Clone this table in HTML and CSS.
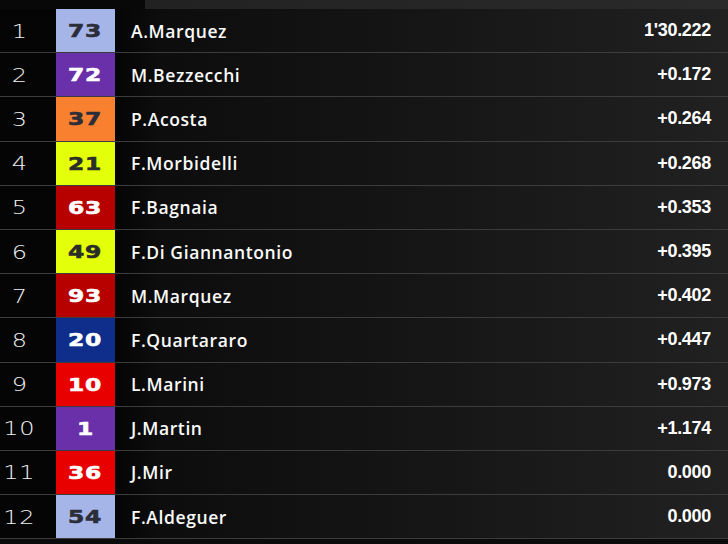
FILE: index.html
```html
<!DOCTYPE html>
<html>
<head>
<meta charset="utf-8">
<link rel="stylesheet" href="styles.css">
</head>
<body>
<div class="top"><div class="top-left"></div><div class="top-right"></div></div>
<div class="table">
  <div class="row"><div class="pos"><span>1</span></div><div class="num c-lav"><span>73</span></div><div class="name">A.Marquez</div><div class="time">1'30.222</div></div>
  <div class="row"><div class="pos"><span>2</span></div><div class="num c-pur"><span>72</span></div><div class="name">M.Bezzecchi</div><div class="time">+0.172</div></div>
  <div class="row"><div class="pos"><span>3</span></div><div class="num c-ora"><span>37</span></div><div class="name">P.Acosta</div><div class="time">+0.264</div></div>
  <div class="row"><div class="pos"><span>4</span></div><div class="num c-yel"><span>21</span></div><div class="name">F.Morbidelli</div><div class="time">+0.268</div></div>
  <div class="row"><div class="pos"><span>5</span></div><div class="num c-dred"><span>63</span></div><div class="name">F.Bagnaia</div><div class="time">+0.353</div></div>
  <div class="row"><div class="pos"><span>6</span></div><div class="num c-yel"><span>49</span></div><div class="name">F.Di Giannantonio</div><div class="time">+0.395</div></div>
  <div class="row"><div class="pos"><span>7</span></div><div class="num c-dred"><span>93</span></div><div class="name">M.Marquez</div><div class="time">+0.402</div></div>
  <div class="row"><div class="pos"><span>8</span></div><div class="num c-blu"><span>20</span></div><div class="name">F.Quartararo</div><div class="time">+0.447</div></div>
  <div class="row"><div class="pos"><span>9</span></div><div class="num c-red"><span>10</span></div><div class="name">L.Marini</div><div class="time">+0.973</div></div>
  <div class="row"><div class="pos"><span>10</span></div><div class="num c-pur"><span>1</span></div><div class="name">J.Martin</div><div class="time">+1.174</div></div>
  <div class="row"><div class="pos"><span>11</span></div><div class="num c-red"><span>36</span></div><div class="name">J.Mir</div><div class="time">0.000</div></div>
  <div class="row"><div class="pos"><span>12</span></div><div class="num c-lav"><span>54</span></div><div class="name">F.Aldeguer</div><div class="time">0.000</div></div>
</div>
</body>
</html>
```
FILE: styles.css
```css
html, body {
  margin: 0;
  padding: 0;
}
body {
  width: 728px;
  height: 544px;
  overflow: hidden;
  background: #0b0b0b;
  font-family: "Open Sans", "DejaVu Sans", sans-serif;
  color: #fff;
}
.top {
  display: flex;
  height: 9px;
}
.top-left {
  width: 145px;
  background: #080808;
}
.top-right {
  flex: 1;
  background: linear-gradient(to right, #222 0%, #2a2a2a 100%);
}
.table {
  display: flex;
  flex-direction: column;
}
.row {
  display: flex;
  align-items: stretch;
  height: 43.2px;
  border-bottom: 1px solid #3c3c3c;
  background: linear-gradient(to right, #050505 0%, #050505 16%, #0d0d0d 22%, #161616 60%, #212121 100%);
}
.pos {
  width: 39px;
  margin-right: 17px;
  display: flex;
  align-items: center;
  justify-content: center;
  font-family: "DejaVu Sans", sans-serif;
  font-size: 20px;
  font-weight: 300;
  color: #f2f2f2;
}
.pos span {
  display: inline-block;
  transform: scaleX(1.2);
  letter-spacing: 0.5px;
}
.num {
  width: 59px;
  display: flex;
  align-items: center;
  justify-content: center;
  font-family: "DejaVu Sans", sans-serif;
  font-weight: 700;
  font-size: 18px;
  color: #fff;
}
.num span {
  display: inline-block;
  transform: scaleX(1.3);
  -webkit-text-stroke: 0.6px currentColor;
  letter-spacing: 0.5px;
}
.c-lav { background: #a6b5e7; color: #2b2d38; }
.c-pur { background: #6a30aa; }
.c-ora { background: #f8802f; color: #2b2d38; }
.c-yel { background: #e3ff0a; color: #2b2d28; }
.c-dred { background: #b70000; }
.c-blu { background: #0f2e8c; }
.c-red { background: #e80000; }
.name {
  flex: 1;
  padding-left: 16px;
  display: flex;
  align-items: center;
  font-size: 17.5px;
  font-weight: 600;
  letter-spacing: 0.6px;
  color: #fafafa;
}
.time {
  padding-right: 17px;
  display: flex;
  align-items: center;
  font-family: "Liberation Sans", Arial, sans-serif;
  font-weight: 700;
  font-size: 18px;
  letter-spacing: -0.3px;
  color: #fff;
}
```
